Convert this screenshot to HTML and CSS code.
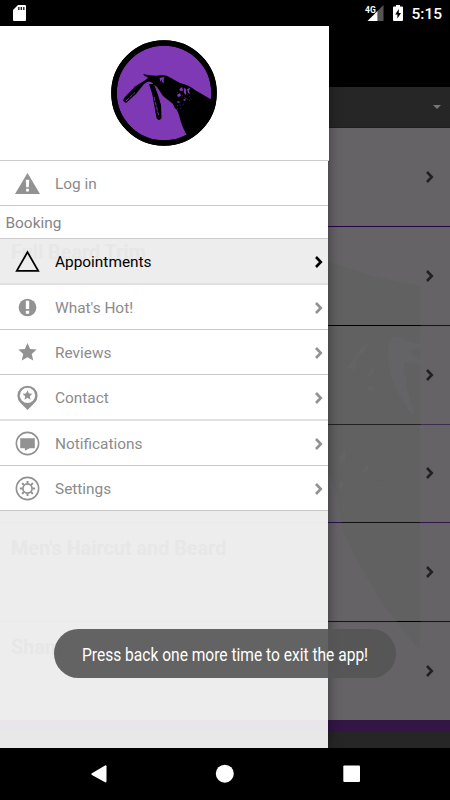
FILE: index.html
```html
<!DOCTYPE html>
<html lang="en">
<head>
<meta charset="utf-8">
<title>Appointments</title>
<link rel="stylesheet" href="styles.css">
</head>
<body>
<svg width="0" height="0" class="defs">
  <symbol id="chev" viewBox="0 0 10 14"><path d="M2 2l4.800 5L2 12" fill="none" stroke="currentColor" stroke-width="2.600"/></symbol>
  <symbol id="star" viewBox="0 0 20 20"><path d="M10 0.800l2.700 6.100 6.600.7-5 4.400 1.500 6.600L10 15.200l-5.800 3.400L5.700 12 .7 7.600l6.600-.7z" fill="currentColor"/></symbol>
</svg>
<header class="status">
  <svg class="sd" width="14" height="17" viewBox="0 0 14 17"><path d="M5 0h7q1 0 1 1v14q0 1-1 1H1q-1 0-1-1V5z" fill="#fff"/><path d="M5.800 2v3M8.300 2v3M10.800 2v3" stroke="#222" stroke-width="1.400"/></svg>
  <svg class="signal" width="20" height="18" viewBox="0 0 20 18"><path d="M19.500 1v16h-6V7z" fill="#555"/><path d="M13.500 7v10H3.500z" fill="#fff"/><text x="1" y="8.500" class="net">4G</text></svg>
  <svg class="battery" width="10" height="17" viewBox="0 0 10 17"><path d="M3 0h4v1.500h2q1 0 1 1V15q0 1-1 1H1q-1 0-1-1V2.500q0-1 1-1h2z" fill="#fff"/><path d="M5.800 4L2.200 9.500h2.200V13.500L8 8H5.800z" fill="#000"/></svg>
  <span class="clock">5:15</span>
</header>
<main class="app">
  <section class="page">
    <div class="titlebar"></div>
    <div class="filter"><i class="caret"></i></div>
    <div class="services">
      <svg class="mark" width="420" height="592" viewBox="0 0 420 592"><path d="M328 133Q370 150 420 158V522Q404 504 385 479Q360 440 345 407L341 394L337 365L328 345z" fill="#616161"/><g fill="#646365"><path d="M391 210Q397 206 404 212L420 216V221L409 222L420 232V236L404 234Q404 256 414 284L413 288Q393 262 389 240Q386 218 391 210z"/><path d="M371 213l-11 8-5 8 8-4zM358 224l-11 16 8 2zM373 238l-6 11 6-3zM368 258l6 1-1 4-6-1zM339 328l7-7-1 12-6 5zM362 342l6-6v6l-6 3zM340 352l4 2-3 9-3-3zM377 356l4 4-3 1z"/></g></svg>
      <div class="service"><svg class="chev"><use href="#chev"/></svg></div>
      <div class="service black"><svg class="chev"><use href="#chev"/></svg></div>
      <div class="service dark"><svg class="chev"><use href="#chev"/></svg></div>
      <div class="service part"><svg class="chev"><use href="#chev"/></svg></div>
      <div class="service edge"><svg class="chev"><use href="#chev"/></svg></div>
      <div class="service last"><svg class="chev"><use href="#chev"/></svg></div>
    </div>
    <div class="purple"></div>
    <div class="foot"></div>
  </section>
  <nav class="drawer">
    <div class="brand">
      <svg width="106" height="106" viewBox="0 0 106 106">
        <circle cx="53" cy="53" r="50" fill="#8039b5" stroke="#000" stroke-width="5.600"/>
        <path d="M32 34Q38 35.500 45 35.800L51 35Q56 35 60 38L69 43Q78 45 84 50L101 60Q100 82 77 97Q71 88 68 75L66 70Q63 68 62 64L52 56L46 47L40 42L34 41L37 37.500Q33 36 32 34Z" fill="#000"/>
        <path d="M36 39L24 46.500L13 58L12 61L15 63L25 54L33 44L38 41ZM38 44L43 44L47 55L50 65L50.500 78Q48 82 45.500 78L43 64Q42 54 38 44Z" fill="#000"/>
        <path d="M15 61l9-8.500M43 57l4.500 18" stroke="#8039b5" stroke-width=".9" stroke-dasharray="4 1"/>
        <path d="M48.500 38l5-1-1 3 .5 3-2-1-.5-3-1 3zM68 50l3-3 1 3-2 1zM73 48l2 1v6l-2-2zM76 49l3-1-1 3 1 3-2-1zM66 55l3-2 1 3-3 1zM66 61l4 1-3 1zM72 60l3-2-1 3z" fill="#8039b5"/>
        <path d="M66 52l13 9M69 48l10 9M66 66l7-2M66 69l4-1" stroke="#8039b5" stroke-width=".7" stroke-dasharray="1 2"/>
        <circle cx="53" cy="53" r="50" fill="none" stroke="#000" stroke-width="5.600"/>
      </svg>
    </div>
    <a class="item"><svg class="icon" viewBox="0 0 24 24"><path d="M12 2l12 20H0z" fill="currentColor"/><path d="M10.300 8.500h3.400l-.5 7h-2.400zM10.700 17h2.600v2.600h-2.600z" fill="#fff"/></svg><span class="label">Log in</span></a>
    <h2 class="group">Booking</h2>
    <a class="item active"><span class="ghost full">Full Beard Trim</span><svg class="icon" viewBox="0 0 24 24"><path d="M12 3L22.300 21H1.700z" fill="none" stroke="currentColor" stroke-width="1.700"/></svg><span class="label">Appointments</span><svg class="chev"><use href="#chev"/></svg></a>
    <a class="item"><svg class="icon" viewBox="0 0 24 24"><circle cx="12" cy="12" r="8.500" fill="currentColor"/><path d="M10.400 5.500h3.200v8h-3.200zM10.400 15h3.200v3h-3.200z" fill="#fff"/></svg><span class="label">What's Hot!</span><svg class="chev"><use href="#chev"/></svg></a>
    <a class="item"><svg class="icon" viewBox="0 0 24 24"><use href="#star" x="2.500" y="2" width="19" height="19"/></svg><span class="label">Reviews</span><svg class="chev"><use href="#chev"/></svg></a>
    <a class="item tall"><svg class="icon" viewBox="0 0 24 26"><path d="M12 26L4.500 18.500A10.500 10.500 0 1 1 19.500 18.500z" fill="currentColor"/><circle cx="12" cy="10.800" r="8" fill="#fff"/><use href="#star" x="6.500" y="5" width="11" height="11"/></svg><span class="label">Contact</span><svg class="chev"><use href="#chev"/></svg></a>
    <a class="item"><svg class="icon" viewBox="0 0 24 24"><circle cx="12" cy="12" r="10.700" fill="none" stroke="currentColor" stroke-width="1.500"/><path d="M5 7h14v9.500H14l-4.500 2.500v-2.500H5z" fill="currentColor"/></svg><span class="label">Notifications</span><svg class="chev"><use href="#chev"/></svg></a>
    <a class="item"><svg class="icon" viewBox="0 0 24 24"><circle cx="12" cy="12" r="10.700" fill="none" stroke="currentColor" stroke-width="1.500"/><circle cx="12" cy="12" r="4.400" fill="none" stroke="currentColor" stroke-width="1.600"/><path d="M12 7.300V4.700M12 16.700v2.600M7.300 12H4.700M16.700 12h2.600M8.700 8.700L6.800 6.800M15.300 8.700l1.900-1.900M8.700 15.300l-1.900 1.900M15.300 15.300l1.900 1.900" stroke="currentColor" stroke-width="1.900"/></svg><span class="label">Settings</span><svg class="chev"><use href="#chev"/></svg></a>
    <div class="rest">
      <div class="ghostrow gap"></div>
      <div class="ghostrow"><span class="ghost">Men's Haircut and Beard</span></div>
      <div class="ghostrow last"><span class="ghost">Sham</span></div>
      <div class="tint"></div>
      <div class="tail"></div>
    </div>
  </nav>
  <div class="toast"><span>Press back one more time to exit the app!</span></div>
</main>
<footer class="sysnav">
  <svg width="450" height="52" viewBox="0 0 450 52"><path d="M91.500 25.500L105.500 17.300q1 0 1 1V33.500q0 1-1 1L91.500 26.800z" fill="#fff"/><circle cx="224.800" cy="25.700" r="9" fill="#fff"/><rect x="343.300" y="17.400" width="16.700" height="16.600" rx="1" fill="#fff"/></svg>
</footer>
</body>
</html>
```
FILE: styles.css
```css
* { box-sizing: border-box; }
body { margin: 0; width: 450px; height: 800px; overflow: hidden; background: #000; font-family: Roboto, "Liberation Sans", sans-serif; display: flex; flex-direction: column; }
svg { display: block; flex: none; }
.defs { position: absolute; }
.status { height: 26px; flex: none; display: flex; align-items: flex-start; padding: 5px 8px 0 13px; color: #fff; }
.signal { margin-left: auto; margin-top: -1px; }
.net { font: 700 8.5px Roboto, sans-serif; fill: #fff; }
.battery { margin-left: 9px; }
.clock { margin-left: 8px; font-size: 15.5px; line-height: 19px; font-weight: 500; }
.app { height: 722px; flex: none; display: grid; grid-template: 722px / 450px; position: relative; }
.page, .drawer { grid-area: 1 / 1; }
.page { display: flex; flex-direction: column; background: #262626; }
.titlebar { height: 61px; background: #000; }
.filter { height: 41px; border-bottom: 1px solid #2b1144; display: flex; justify-content: flex-end; padding: 18px 9px 0 0; }
.caret { width: 8px; height: 5px; border: 4px solid transparent; border-top: 4.5px solid #777; border-bottom: 0; }
.services { height: 592px; background: #656366; position: relative; display: grid; grid-template-rows: 99px 99px 99px 98px 99px 98px; }
.mark { position: absolute; left: 0; top: 0; }
.service { display: flex; align-items: center; justify-content: flex-end; padding: 0 15px 1px 0; border-bottom: 1px solid #250347; color: #222; position: relative; }
.service.last { border: 0; }
.service.black { border-image: linear-gradient(to right, #000 420px, #250347 420px) 1; }
.service.dark { border-image: linear-gradient(to right, #222 420px, #3f2a58 420px) 1; }
.service.part { border-image: linear-gradient(to right, #2b0f4d 341px, #111 341px, #111 419px, #321650 419px) 1; }
.service.edge { border-image: linear-gradient(to right, #250347 396px, #000 396px, #000 420px, #250347 420px) 1; }
.chev { width: 10px; height: 14px; }
.purple { height: 12px; background: #331646; }
.foot { height: 16px; background: #262626; }
.drawer { width: 328px; display: flex; flex-direction: column; position: relative; box-shadow: 0 0 12px rgba(0,0,0,.45); clip-path: inset(0 -20px 0 0); }
.brand { height: 135px; width: 329px; background: #fff; border-bottom: 1px solid #ccc; padding: 14px 0 0 111px; }
.item { height: 45px; flex: none; display: flex; align-items: center; background: #fff; border-bottom: 1px solid #c8c8c8; color: #929292; padding: 1px 4.5px 0 15px; position: relative; }
.item.active, .item.tall { height: 46px; border-bottom: 2px solid #e0e0e0; }
.icon { width: 25px; height: 25px; }
.label { margin-left: 15px; font-size: 15.4px; line-height: 20px; color: #8b8b8b; flex: 1; position: relative; }
.group { margin: 0; height: 33px; background: #fff; border-bottom: 1px solid #ccc; font-size: 15.4px; font-weight: 400; line-height: 34px; padding-left: 5.5px; color: #858585; }
.active, .active .label { color: #000; }
.item.active { background: #ededed; }
.active .icon { position: relative; }
.ghost { font-size: 19.8px; line-height: 24px; font-weight: 700; color: #e7e7e7; white-space: nowrap; }
.full { position: absolute; left: 11px; top: 2px; }
.rest { flex: 1; background: #ededed; }
.ghostrow { height: 98.5px; border-bottom: 1px solid #e9e9e9; padding: 14px 0 0 11px; overflow: hidden; }
.ghostrow.gap { height: 12px; padding: 0; }
.ghostrow.last { border: 0; }
.tint { height: 12px; background: #e8e6eb; }
.tail { height: 16px; background: #e8e8e8; }
.toast { position: absolute; left: 54px; top: 603px; width: 342px; height: 49px; border-radius: 25px; background: rgba(85,85,85,.91); color: #fff; font-size: 18px; line-height: 51px; white-space: nowrap; }
.toast span { display: inline-block; margin-left: 28px; transform: scaleX(.864); transform-origin: 0 50%; }
.sysnav { height: 52px; background: #000; }
```
